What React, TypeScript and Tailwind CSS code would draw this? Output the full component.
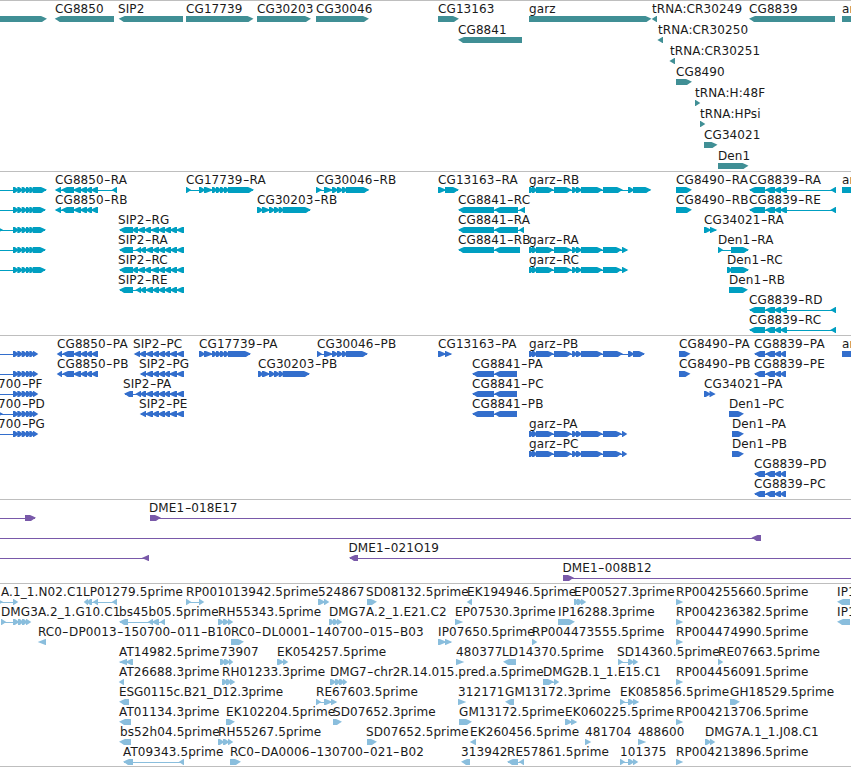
import clsx from "clsx";

type Dir = "R" | "L";

// [label, label x, direction, exons]
// exons: groups split by commas, every group is a run of touching block edges
type Feature = [string, number, Dir, string];

type TrackData = {
  name: string;
  color: string;
  rowClass: string;
  padClass: string;
  rows: Feature[][];
};

const GARZ = "529 532 536 554 572 576 581 603";
const SIP2_LONG = "119 133 138 145 151 159 165 171 177 184";
const SIP2_SHORT = "119 133,135.5 141 146 153 159 165 171 177 184";
const LEFT_R = "-8 -4,13 17.3 21.7 26 29.3 32.7 46";
const LEFT_R_TIP = "-8 3,13 17.3 21.7 26 29.3 32.7 46";
const LEFT_P = "-8 -4,13 17.3 21.7 26 29.3 33 38";
const LEFT_P_TIP = "-8 3,13 17.3 21.7 26 29.3 33 38";
const CG8839_R = "749 765 775 781 787,830.5 836";
const CG8839_P = "754 765 775 781 786";

const tracks: TrackData[] = [
  {
    name: "genes",
    color: "text-[#408f95]",
    rowClass: "h-[21px]",
    padClass: "pb-[2px]",
    rows: [
      [
        ["", 0, "R", "-8 47"],
        ["CG8850", 55, "L", "54.7 114"],
        ["SIP2", 118, "L", "118.7 183"],
        ["CG17739", 186, "R", "186 253.5"],
        ["CG30203", 257, "R", "257 311"],
        ["CG30046", 316, "R", "316 369"],
        ["CG13163", 438, "R", "438 459"],
        ["garz", 529, "R", "529 651.5"],
        ["tRNA:CR30249", 652, "L", "652 657"],
        ["CG8839", 749, "L", "749 835"],
        ["an", 842, "R", "842 870"],
      ],
      [
        ["CG8841", 458, "L", "458 522"],
        ["tRNA:CR30250", 658, "L", "657.7 663"],
      ],
      [["tRNA:CR30251", 670, "L", "669.7 675"]],
      [["CG8490", 676, "R", "676 692"]],
      [["tRNA:H:48F", 695, "R", "695 700"]],
      [["tRNA:HPsi", 700, "R", "700 705"]],
      [["CG34021", 704, "R", "704 717.5"]],
      [["Den1", 718, "R", "718 748.5"]],
    ],
  },
  {
    name: "transcripts",
    color: "text-[#009fc1]",
    rowClass: "h-5",
    padClass: "pb-[3px]",
    rows: [
      [
        ["", 0, "R", "-8 -4,13 17.3 21.7 26 29.3 32.7 47"],
        ["CG8850-RA", 55, "L", "55 61 74 81 87 92 98,112 117"],
        ["CG17739-RA", 186, "R", "186 191,199 204 212 216 220 224 228 254"],
        ["CG30046-RB", 316, "R", "316 322,324 332 337 342 346 369.3"],
        ["CG13163-RA", 438, "R", "438 445 459"],
        ["garz-RB", 529, "R", GARZ + " 623,628 633 651.3"],
        ["CG8490-RA", 676, "R", "676 692"],
        ["CG8839-RA", 749, "L", CG8839_R],
        ["an", 842, "R", "842 870"],
      ],
      [
        ["", 0, "R", LEFT_R],
        ["CG8850-RB", 55, "L", "55 61 74 81 87 92 98"],
        ["CG30203-RB", 257, "R", "257 262 269 274 278.7 282.7 311"],
        ["CG8841-RC", 458, "L", "458 494 518,519 525"],
        ["CG8490-RB", 676, "R", "676 692"],
        ["CG8839-RE", 749, "L", CG8839_R],
      ],
      [
        ["", 0, "R", LEFT_R_TIP],
        ["SIP2-RG", 118, "L", SIP2_LONG],
        ["CG8841-RA", 458, "L", "458 494 518,519 524"],
        ["CG34021-RA", 704, "R", "704 710 717"],
      ],
      [
        ["", 0, "R", LEFT_R],
        ["SIP2-RA", 118, "L", SIP2_SHORT],
        ["CG8841-RB", 458, "L", "458 494 520"],
        ["garz-RA", 529, "R", GARZ + " 622 628"],
        ["Den1-RA", 718, "R", "718 723,731 749"],
      ],
      [
        ["", 0, "R", LEFT_R],
        ["SIP2-RC", 118, "L", SIP2_LONG],
        ["garz-RC", 529, "R", GARZ + " 622 628"],
        ["Den1-RC", 727, "R", "727 731 749"],
      ],
      [
        ["SIP2-RE", 118, "L", SIP2_SHORT],
        ["Den1-RB", 729, "R", "729 748"],
      ],
      [["CG8839-RD", 749, "L", CG8839_R]],
      [["CG8839-RC", 749, "L", CG8839_R]],
    ],
  },
  {
    name: "proteins",
    color: "text-[#336ecc]",
    rowClass: "h-5",
    padClass: "pb-[3px]",
    rows: [
      [
        ["", 0, "R", LEFT_P],
        ["CG8850-PA", 57, "L", "57 62 74 81 87 92 98"],
        ["SIP2-PC", 133, "L", "134 140 146 153 159 165 170 177 184"],
        ["CG17739-PA", 199, "R", "199 204 212 216 220 224 228 251"],
        ["CG30046-PB", 317, "R", "317 322,324 332 337 342 346 368"],
        ["CG13163-PA", 438, "R", "438 445 452"],
        ["garz-PB", 529, "R", GARZ + " 623,628 633 645"],
        ["CG8490-PA", 679, "R", "679 690.5"],
        ["CG8839-PA", 754, "L", CG8839_P],
        ["an", 842, "R", "842 870"],
      ],
      [
        ["", 0, "R", LEFT_P],
        ["CG8850-PB", 57, "L", "57 62 74 81 87 92 98"],
        ["SIP2-PG", 139, "L", "140 146 153 159 165 170 177 184"],
        ["CG30203-PB", 258, "R", "258 262 269 274 278.7 282.7 310"],
        ["CG8841-PA", 472, "L", "472 494 517"],
        ["CG8490-PB", 679, "R", "679 690.5"],
        ["CG8839-PE", 754, "L", CG8839_P],
      ],
      [
        ["700-PF", -2, "R", LEFT_P],
        ["SIP2-PA", 123, "L", "124 133,135.5 141 146 153 159 165 170 177 184"],
        ["CG8841-PC", 472, "L", "472 494 517"],
        ["CG34021-PA", 704, "R", "704 709.5 715.3"],
      ],
      [
        ["700-PD", -2, "R", LEFT_P_TIP],
        ["SIP2-PE", 139, "L", "140 146 153 159 165 170 177 184"],
        ["CG8841-PB", 472, "L", "472 494 517"],
        ["Den1-PC", 729, "R", "729 744"],
      ],
      [
        ["700-PG", -2, "R", LEFT_P],
        ["garz-PA", 529, "R", GARZ + " 622 627"],
        ["Den1-PA", 732, "R", "732 744"],
      ],
      [
        ["garz-PC", 529, "R", GARZ + " 622 627"],
        ["Den1-PB", 732, "R", "732 744"],
      ],
      [["CG8839-PD", 754, "L", CG8839_P]],
      [["CG8839-PC", 754, "L", CG8839_P]],
    ],
  },
  {
    name: "clones",
    color: "text-[#7959a9]",
    rowClass: "h-5",
    padClass: "pb-[3px]",
    rows: [
      [
        ["", 0, "R", "-8 -4,25 36"],
        ["DME1-018E17", 149, "R", "150 161,860 870"],
      ],
      [["", 0, "L", "-8 -4,751.5 761"]],
      [
        ["", 0, "L", "-8 -4,142 149"],
        ["DME1-021O19", 348.5, "L", "349 358,860 870"],
      ],
      [["DME1-008B12", 562.5, "R", "563 574,860 870"]],
    ],
  },
  {
    name: "ests",
    color: "text-[#8abedd]",
    rowClass: "h-5",
    padClass: "pb-[2px]",
    rows: [
      [
        ["A.1_1.N02.C1", 1, "R", "-3 3,13 18"],
        ["LP01279.5prime", 83, "L", "84 88 92,93 98,112 117"],
        ["RP001013942.5prime", 186, "R", "186 191,199 204"],
        ["524867", 318, "R", "318 324 329"],
        ["SD08132.5prime", 366, "R", "367 377"],
        ["EK194946.5prime", 467, "L", "467 472"],
        ["EP00527.3prime", 574, "R", "574 577 581 586"],
        ["RP004255660.5prime", 676, "R", "676 683"],
        ["IP1", 837, "L", "837 850"],
      ],
      [
        ["DMG3A.2_1.G10.C1", 1, "R", "1 6,13 18 22 26 31"],
        ["bs45b05.5prime", 119, "L", "119 128,148 153 159,160 165"],
        ["RH55343.5prime", 218, "R", "218 223 228 233"],
        ["DMG7A.2_1.E21.C2", 329, "R", "329 333 337 342"],
        ["EP07530.3prime", 455, "R", "455 463"],
        ["IP16288.3prime", 558, "R", "558 575"],
        ["RP004236382.5prime", 676, "R", "676 683"],
        ["IP1", 837, "L", "837 850"],
      ],
      [
        ["RC0-DP0013-150700-011-B10", 38, "L", "38 46"],
        ["RC0-DL0001-140700-015-B03", 231, "R", "231 244"],
        ["IP07650.5prime", 438, "R", "438 445 452"],
        ["RP004473555.5prime", 532, "R", "532 537"],
        ["RP004474990.5prime", 676, "R", "676 683"],
      ],
      [
        ["AT14982.5prime", 119, "L", "119 127 133"],
        ["73907", 220, "R", "220 224 229 233"],
        ["EK054257.5prime", 277, "R", "277 283 288"],
        ["480377", 456, "R", "456 464"],
        ["LD14370.5prime", 502, "L", "503 516"],
        ["SD14360.5prime", 617, "R", "618 623,628 633 638"],
        ["RE07663.5prime", 718, "R", "718 723"],
      ],
      [
        ["AT26688.3prime", 119, "L", "119 124"],
        ["RH01233.3prime", 222, "R", "222 226 230 235"],
        ["DMG7-chr2R.14.015.pred.a.5prime", 330, "R", "330 335 339 343 347"],
        ["DMG2B.1_1.E15.C1", 543, "R", "543 554 559"],
        ["RP004456091.5prime", 676, "R", "676 683"],
      ],
      [
        ["ESG0115c.B21_D12.3prime", 119, "L", "119 129"],
        ["RE67603.5prime", 316, "R", "316 321,324 331 337"],
        ["312171", 458, "R", "458 466"],
        ["GM13172.3prime", 505, "L", "505 514"],
        ["EK085856.5prime", 620, "R", "620 625,628 633 639"],
        ["GH18529.5prime", 730, "R", "730 740"],
      ],
      [
        ["AT01134.3prime", 119, "L", "119 131"],
        ["EK102204.5prime", 226, "R", "226 235"],
        ["SD07652.3prime", 333, "R", "333 342"],
        ["GM13172.5prime", 459, "R", "459 472"],
        ["EK060225.5prime", 565, "R", "565 571 577"],
        ["RP004213706.5prime", 676, "R", "676 683"],
      ],
      [
        ["bs52h04.5prime", 120, "L", "119 131"],
        ["RH55267.5prime", 218, "R", "218 223 228 233"],
        ["SD07652.5prime", 366, "R", "367 377"],
        ["EK260456.5prime", 470, "L", "470 476"],
        ["481704", 585, "R", "585 591"],
        ["488600", 638, "R", "638 646"],
        ["DMG7A.1_1.J08.C1", 705, "R", "705 710 715"],
      ],
      [
        ["AT09343.5prime", 123, "L", "123 133,179 184"],
        ["RC0-DA0006-130700-021-B02", 230, "R", "230 241"],
        ["313942", 461, "L", "461 470"],
        ["RE57861.5prime", 507, "L", "507 518,519 524"],
        ["101375", 620, "R", "620 625,628 633 638"],
        ["RP004213896.5prime", 676, "R", "676 683"],
      ],
    ],
  },
];

// Long blocks get a rounded head, short ones are a plain triangle.
// Inside a run the tip of a short block reaches into its neighbour.
function blockPath(a: number, b: number, dir: Dir, joined: boolean) {
  const from = dir === "R" ? a : b;
  const to = dir === "R" ? b : a;
  const s = dir === "R" ? 1 : -1;
  if (b - a < 8.5) {
    const base = from + (joined ? 1.8 : 0.6) * s;
    const tip = to + (joined ? 1.8 : 0.3) * s;
    return `M${from} 0H${base}L${tip} 2.9L${base} 6H${from}Z`;
  }
  return `M${from} 0H${to - 6 * s}L${to - 2.5 * s} 1.5L${to} 2.7L${to - 2.5 * s} 4.3L${to - 5 * s} 6H${from}Z`;
}

function Glyph({ dir, exons }: { dir: Dir; exons: string }) {
  const groups = exons.split(",").map((g) => g.split(" ").map(Number));
  const start = groups[0][0];
  const last = groups[groups.length - 1];
  const end = last[last.length - 1];
  const blocks = groups.flatMap((g) =>
    g.slice(1).map((b, i) => {
      const outer = dir === "R" ? i === g.length - 2 : i === 0;
      return blockPath(g[i], b, dir, !outer);
    })
  );

  return (
    <>
      {blocks.length > 1 && (
        <path d={`M${start + 1} 3H${end - 1}V4H${start + 1}Z`} />
      )}
      {blocks.map((d, i) => (
        <path key={i} d={d} />
      ))}
    </>
  );
}

function Label({ text, x }: { text: string; x: number }) {
  return (
    <span
      className={clsx(
        "absolute top-0 text-[12px] leading-4 whitespace-pre text-[#1a1a1a]",
        text.startsWith("ESG") && "tracking-[-0.08px]",
        text.startsWith("DMG7-") && "tracking-[0.03px]",
        !text.startsWith("ESG") && !text.startsWith("DMG7-") && "tracking-[0.1px]"
      )}
      style={{ left: x }}
    >
      {text.split("-").map((part, i) => (
        <span key={i}>
          {i > 0 && <span className="mx-[1.3px] inline-block scale-x-150">-</span>}
          {part}
        </span>
      ))}
    </span>
  );
}

function Track({ track }: { track: TrackData }) {
  return (
    <section className={clsx("border-t border-[#bebebe]", track.padClass)}>
      {track.rows.map((row, i) => (
        <div key={i} className={clsx("relative", track.rowClass)}>
          {row.map(([label, x], j) => (
            <Label key={j} text={label} x={x} />
          ))}
          <svg
            className={clsx("absolute top-[15px] left-0 h-1.5 w-[851px]", track.color)}
            viewBox="0 0 851 6"
            fill="currentColor"
          >
            {row.map(([, , dir, exons], j) => (
              <Glyph key={j} dir={dir} exons={exons} />
            ))}
          </svg>
        </div>
      ))}
    </section>
  );
}

export default function App() {
  return (
    <main className="h-[767px] w-[851px] overflow-hidden border-b border-[#bebebe] bg-white font-['DejaVu_Sans',sans-serif]">
      {tracks.map((track) => (
        <Track key={track.name} track={track} />
      ))}
    </main>
  );
}
